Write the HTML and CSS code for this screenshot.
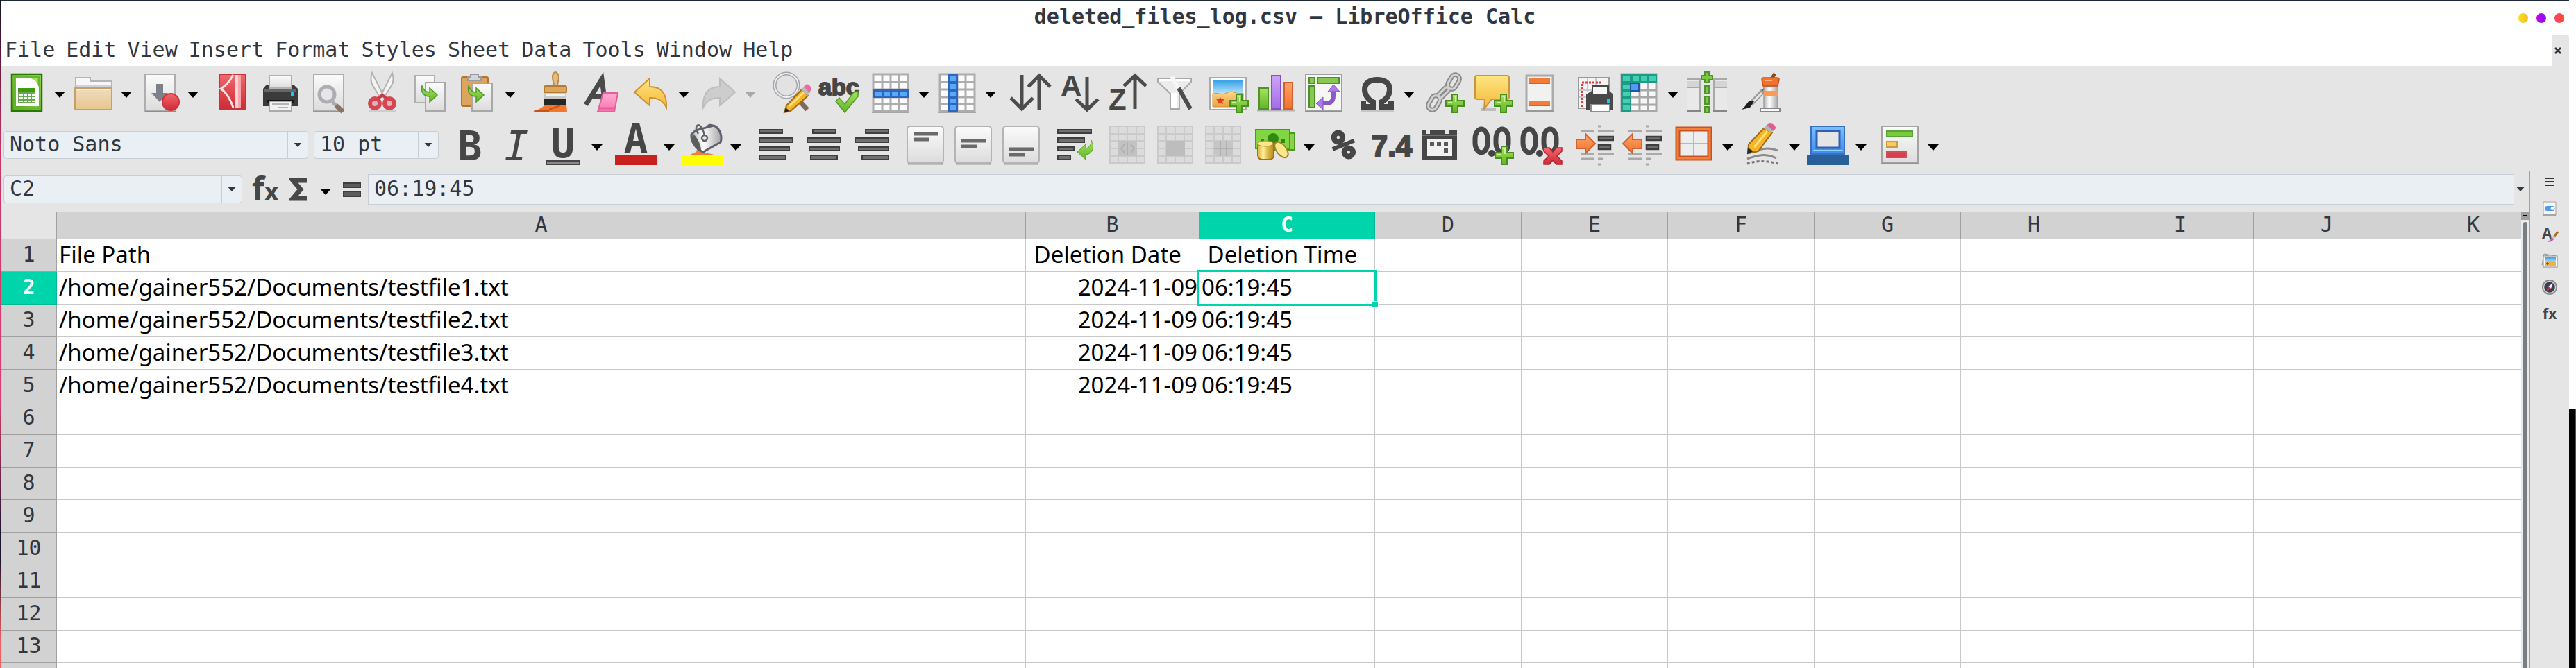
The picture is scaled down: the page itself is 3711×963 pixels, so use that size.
FILE: index.html
```html
<!DOCTYPE html>
<html lang="en">
<head>
<meta charset="utf-8">
<title>deleted_files_log.csv — LibreOffice Calc</title>
<link rel="stylesheet" href="styles.css">
</head>
<body>
<svg class="defs" width="0" height="0" aria-hidden="true">
  <defs>
    <linearGradient id="page" x1="0" y1="0" x2="0" y2="1"><stop offset="0" stop-color="#fbfbfb"/><stop offset="1" stop-color="#dcdcdc"/></linearGradient>
    <linearGradient id="green" x1="0" y1="0" x2="0" y2="1"><stop offset="0" stop-color="#a6e35e"/><stop offset="1" stop-color="#62b426"/></linearGradient>
    <linearGradient id="calc" x1="0" y1="1" x2="1" y2="0"><stop offset="0" stop-color="#4f9a12"/><stop offset="1" stop-color="#b8f078"/></linearGradient>
    <linearGradient id="tan" x1="0" y1="0" x2="0" y2="1"><stop offset="0" stop-color="#efdcc0"/><stop offset="1" stop-color="#e8c68d"/></linearGradient>
    <linearGradient id="gold" x1="0" y1="0" x2="0" y2="1"><stop offset="0" stop-color="#ffe680"/><stop offset="1" stop-color="#f3b73a"/></linearGradient>
    <linearGradient id="coin" x1="0" y1="0" x2="1" y2="0"><stop offset="0" stop-color="#d8b440"/><stop offset=".35" stop-color="#fff0a0"/><stop offset=".6" stop-color="#e0bd4a"/><stop offset="1" stop-color="#b88a20"/></linearGradient>
    <linearGradient id="orange" x1="0" y1="0" x2="0" y2="1"><stop offset="0" stop-color="#ffa468"/><stop offset="1" stop-color="#f1702c"/></linearGradient>
    <linearGradient id="purple" x1="0" y1="0" x2="0" y2="1"><stop offset="0" stop-color="#cfa2f7"/><stop offset="1" stop-color="#a36ce6"/></linearGradient>
    <linearGradient id="red" x1="0" y1="0" x2="0" y2="1"><stop offset="0" stop-color="#f0686c"/><stop offset="1" stop-color="#cf2a35"/></linearGradient>
    <linearGradient id="blue" x1="0" y1="0" x2="0" y2="1"><stop offset="0" stop-color="#7cc0ff"/><stop offset="1" stop-color="#3f8cea"/></linearGradient>
    <linearGradient id="sky" x1="0" y1="0" x2="0" y2="1"><stop offset="0" stop-color="#35a2e8"/><stop offset="1" stop-color="#bfe6fb"/></linearGradient>
    <linearGradient id="sand" x1="0" y1="0" x2="0" y2="1"><stop offset="0" stop-color="#fbd58a"/><stop offset="1" stop-color="#eba23c"/></linearGradient>
    <linearGradient id="pink" x1="0" y1="0" x2="0" y2="1"><stop offset="0" stop-color="#ffaed2"/><stop offset="1" stop-color="#f574ae"/></linearGradient>
    <linearGradient id="silver" x1="0" y1="0" x2="1" y2="0"><stop offset="0" stop-color="#b4b4b4"/><stop offset=".4" stop-color="#ffffff"/><stop offset="1" stop-color="#a6a6a6"/></linearGradient>
    <symbol id="plus" viewBox="0 0 28 28"><path d="M10 1h8v9h9v8h-9v9h-8v-9H1v-8h9z" fill="url(#green)" stroke="#4a8f22" stroke-width="2"/><path d="M12 4h3v8M4 13h6" fill="none" stroke="#c9f29a" stroke-width="2"/></symbol>
    <symbol id="caret" viewBox="0 0 16 9"><path d="M0 0h16L8 9z" fill="currentColor"/></symbol>
    <symbol id="goarrow" viewBox="0 0 26 26"><path d="M2 1c-2 9 2 15 11 15v8l11-10L13 4v6C8 10 4 7 2 1z" fill="url(#green)" stroke="#4b9a2a" stroke-width="1.500"/></symbol>
    <symbol id="grid" viewBox="0 0 60 60"><path d="M3 57h54v2H3z" fill="#a6a6a6"/><rect x="5" y="3" width="50" height="53" fill="#fbfbfb"/><path d="M5 3h50v53H5zM5 14.500h50M5 25h50M5 36h50M5 46h50M18 3v53M30 3v53M42 3v53" fill="none" stroke="#adadad" stroke-width="3"/></symbol>
    <symbol id="palegrid" viewBox="0 0 60 60"><rect x="6" y="3" width="50" height="53" fill="#dcdcdc"/><path d="M6 3h50v53H6zM6 14h50M6 24h50M6 35h50M6 46h50M18 3v53M31 3v53M44 3v53" fill="none" stroke="#cacaca" stroke-width="2"/></symbol>
    <symbol id="button" viewBox="0 0 60 60"><path d="M7 57h50" stroke="#999" stroke-width="3"/><rect x="6" y="3" width="52" height="53" rx="4" fill="url(#page)" stroke="#b4b4b4" stroke-width="2"/></symbol>
    <symbol id="zeros" viewBox="0 0 60 60"><g fill="none" stroke="#464646" stroke-width="7"><rect x="6" y="7" width="18" height="34" rx="9" ry="14"/><rect x="36" y="7" width="18" height="34" rx="9" ry="14"/></g><circle cx="30" cy="42" r="5" fill="#444"/></symbol>
    <symbol id="indentlines" viewBox="0 0 60 60"><path d="M12 10h20M37 10h23M37 3h5M12 43h20M37 43h23M12 50h20M37 50h8M37 58h5" stroke="#a9a9a9" stroke-width="3"/><path d="M38 18h21v5H38zM38 30h17v6H38z" fill="#707070" stroke="#3e3e3e" stroke-width="2.500"/></symbol>
  </defs>
</svg>

<div class="edge-left"></div>
<div class="window">
  <header class="titlebar">
    <h1 class="title">deleted_files_log.csv — LibreOffice Calc</h1>
    <div class="window-buttons">
      <button class="dot dot-min" aria-label="Minimize"></button>
      <button class="dot dot-max" aria-label="Maximize"></button>
      <button class="dot dot-close" aria-label="Close"></button>
    </div>
  </header>

  <div class="menurow">
    <nav class="menubar" aria-label="Menu">
      <button>File</button><button>Edit</button><button>View</button><button>Insert</button><button>Format</button><button>Styles</button><button>Sheet</button><button>Data</button><button>Tools</button><button>Window</button><button>Help</button>
    </nav>
    <button class="close-doc" aria-label="Close document"><svg width="10" height="10" viewBox="0 0 10 10"><path d="M1 1l8 8M9 1L1 9" stroke="#2f343f" stroke-width="2.500"/></svg></button>
  </div>

  <div class="toolbar toolbar-standard">
    <button class="tool" aria-label="New"><svg viewBox="0 0 60 60"><rect x="9" y="3" width="43" height="53" fill="url(#calc)" stroke="#257a00" stroke-width="2.500"/><rect x="13" y="7" width="35" height="45" fill="none" stroke="#69b52c" stroke-width="3"/><path d="M15 9h21c7 2 11 7 12 14v26H15z" fill="#fff"/><path d="M18 23h25v21H18z" fill="#6aa84f"/><path d="M18 23h25v6H18z" fill="#3f9a10"/><g fill="#fff"><path d="M20 31h5v3h-5zM27 31h4v3h-4zM33 31h3v3h-3zM38 31h4v3h-4zM20 36h5v3h-5zM27 36h4v3h-4zM33 36h3v3h-3zM38 36h4v3h-4zM20 41h5v2h-5zM27 41h4v2h-4zM33 41h3v2h-3zM38 41h4v2h-4z"/></g></svg></button>
    <button class="drop" aria-label="New options"><svg><use href="#caret"/></svg></button>
    <button class="tool" aria-label="Open"><svg viewBox="0 0 60 60"><path d="M5 22V8h21v5h31v10z" fill="#f7f7fa" stroke="#b4b4b8" stroke-width="2"/><path d="M6 18h50v4H6z" fill="#d2d2d6"/><rect x="4" y="23" width="53" height="31" fill="url(#tan)" stroke="#c7a068" stroke-width="2"/><path d="M6 25h49" stroke="#fbeeda" stroke-width="2"/></svg></button>
    <button class="drop" aria-label="Open options"><svg><use href="#caret"/></svg></button>
    <button class="tool" aria-label="Save"><svg viewBox="0 0 60 60"><rect x="9" y="3" width="43" height="53" fill="url(#page)" stroke="#aeaeae" stroke-width="2"/><path d="M9 57h44" stroke="#8d8d8d" stroke-width="2"/><path d="M25 17h10v13h7L30 43 18 30h7z" fill="#7d828a"/><circle cx="46" cy="43" r="12" fill="url(#red)" stroke="#d42f3c" stroke-width="2"/></svg></button>
    <button class="drop" aria-label="Save options"><svg><use href="#caret"/></svg></button>
    <span class="sep"></span>
    <button class="tool" aria-label="Export as PDF"><svg viewBox="0 0 60 60"><rect x="12" y="3" width="38" height="50" fill="url(#red)" stroke="#c8323c" stroke-width="2"/><path d="M34 4h9v48h-9z" fill="#f4a6aa"/><path d="M35 4h4v48h-4z" fill="#fbd4d6"/><path d="M32 4C27 13 21 20 14 24c7 4 14 15 18 27" fill="none" stroke="#fbe6e6" stroke-width="3"/></svg></button>
    <button class="tool" aria-label="Print"><svg viewBox="0 0 60 60"><path d="M6 24l5-6h39l6 6v25H6z" fill="#3b3b3b"/><path d="M8 24h46v4H8z" fill="#666"/><path d="M15 5h32v18H15z" fill="url(#page)" stroke="#b2b2b2" stroke-width="2"/><path d="M12 40h38v4H12z" fill="#161616"/><path d="M15 42h32v14H15z" fill="#f2f2f2" stroke="#aaa" stroke-width="2"/><path d="M19 46h24M27 51h15" stroke="#b5b5b5" stroke-width="2"/><path d="M46 29h5v5h-5z" fill="#18c4f8"/></svg></button>
    <button class="tool" aria-label="Print Preview"><svg viewBox="0 0 60 60"><rect x="10" y="3" width="43" height="53" fill="url(#page)" stroke="#aeaeae" stroke-width="2"/><path d="M9 57h44" stroke="#969696" stroke-width="2"/><path d="M37 43l6 6" stroke="#aaa" stroke-width="5"/><path d="M42 48l10 9" stroke="#8b7261" stroke-width="7"/><circle cx="29" cy="32" r="11" fill="#e6e6ea" stroke="#adadb2" stroke-width="5"/></svg></button>
    <span class="sep"></span>
    <button class="tool" aria-label="Cut"><svg viewBox="0 0 60 60"><path d="M17 1c-3 8-2 14 2 20l10 16 4-4zM46 1c3 8 2 14-2 20L34 37l-4-4z" fill="#f4f4f4" stroke="#b2b2b2" stroke-width="2"/><path d="M12 56h40" stroke="#cdcdcd" stroke-width="3"/><g fill="#dcb6b8" stroke="#d64550" stroke-width="6"><circle cx="21" cy="45" r="7"/><circle cx="42" cy="45" r="7"/></g><path d="M25 38l7-5 6 5" fill="none" stroke="#c93c46" stroke-width="4"/></svg></button>
    <button class="tool" aria-label="Copy"><svg viewBox="0 0 60 60"><rect x="10" y="5" width="28" height="39" fill="url(#page)" stroke="#b0b0b0" stroke-width="2"/><rect x="25" y="15" width="28" height="41" fill="url(#page)" stroke="#a8a8a8" stroke-width="2"/><use href="#goarrow" x="18" y="19" width="26" height="26"/></svg></button>
    <button class="tool" aria-label="Paste"><svg viewBox="0 0 60 60"><rect x="8" y="7" width="38" height="42" rx="2" fill="#dca45c" stroke="#a87838" stroke-width="2"/><path d="M17 12V7h4V3h11v4h4v5z" fill="#d6d6da" stroke="#9a9aa0" stroke-width="2"/><rect x="23" y="16" width="29" height="40" fill="url(#page)" stroke="#a8a8a8" stroke-width="2"/><use href="#goarrow" x="16" y="19" width="26" height="26"/></svg></button>
    <button class="drop" aria-label="Paste options"><svg><use href="#caret"/></svg></button>
    <span class="sep"></span>
    <button class="tool" aria-label="Clone Formatting"><svg viewBox="0 0 60 60"><path d="M24 46h31l1 12H8c-3-3 8-3 14-9z" fill="#f07828"/><path d="M10 56h20M30 54l16-6" stroke="#c9501a" stroke-width="2"/><path d="M37 20c0-5-2-8-2-13s3-7 4-7 5 2 5 7-2 8-2 13z" fill="#e6bc80" stroke="#b98a4c" stroke-width="2"/><rect x="23" y="20" width="32" height="10" rx="2" fill="#dda65c" stroke="#b27c34" stroke-width="2"/><path d="M23 30h32v9H23z" fill="#c9c9c9"/><path d="M25 32h28v3H25z" fill="#f2f2f2"/><path d="M23 39h32v8H23z" fill="#262626"/></svg></button>
    <button class="tool" aria-label="Clear Direct Formatting"><svg viewBox="0 0 60 60"><path d="M14 47L37 10l5 37M24 35h18" fill="none" stroke="#4a4a4a" stroke-width="7"/><path d="M39 30h21L55 57H31z" fill="url(#pink)" stroke="#e0609c" stroke-width="2"/><path d="M32 52h23" stroke="#ee5a9c" stroke-width="3"/></svg></button>
    <span class="sep"></span>
    <button class="tool" aria-label="Undo"><svg viewBox="0 0 60 60"><path d="M7 29L29 9v12c16 0 25 9 24 30-5-10-12-14-24-14v11z" fill="url(#gold)" stroke="#d09030" stroke-width="2"/></svg></button>
    <button class="drop" aria-label="Undo options"><svg><use href="#caret"/></svg></button>
    <button class="tool" aria-label="Redo" disabled><svg viewBox="0 0 60 60"><path d="M56 29L34 9v12C18 21 9 30 10 51c5-10 12-14 24-14v11z" fill="#cdcdcd" stroke="#bdbdbd" stroke-width="2"/></svg></button>
    <button class="drop drop-off" aria-label="Redo options" disabled><svg><use href="#caret"/></svg></button>
    <span class="sep"></span>
    <button class="tool" aria-label="Find and Replace"><svg viewBox="0 0 60 60"><path d="M38 34l18 20" stroke="#7d6a5c" stroke-width="7"/><circle cx="26" cy="19" r="17" fill="#e2e2e2" stroke="#a4a4aa" stroke-width="5"/><circle cx="26" cy="19" r="17" fill="none" stroke="#f0f0f2" stroke-width="2"/><path d="M48 25l9 9-25 22-9 2 3-10z" fill="#f6b524" stroke="#a06c14" stroke-width="2"/><path d="M30 49l21-20" stroke="#ffe07a" stroke-width="3"/><path d="M23 58l2-7 5 5z" fill="#222"/><path d="M47 25l4-4 9 9-4 4z" fill="#b9b9b9"/><path d="M51 21l3-3c4-2 9 4 7 8l-2 4z" fill="#ef6a9c"/></svg></button>
    <button class="tool" aria-label="Spelling"><svg viewBox="0 0 60 60"><text x="3" y="33" class="glyph glyph-abc">abc</text><path d="M28 42l5-5 8 9 13-17 6-1v7L41 58z" fill="url(#green)" stroke="#4f9e2a" stroke-width="1.500"/></svg></button>
    <span class="sep"></span>
    <button class="tool" aria-label="Row"><svg viewBox="0 0 60 60"><use href="#grid"/><path d="M4 24h52v13H4z" fill="#2f66bd"/><path d="M7 28h10v6H7zM20 28h9v6h-9zM32 28h9v6h-9zM44 28h10v6H44z" fill="#5aa8f8"/></svg></button>
    <button class="drop" aria-label="Row options"><svg><use href="#caret"/></svg></button>
    <button class="tool" aria-label="Column"><svg viewBox="0 0 60 60"><use href="#grid"/><path d="M16 2h15v55H16z" fill="#2f66bd"/><path d="M19 5h9v8h-9zM19 17h9v7h-9zM19 28h9v7h-9zM19 38h9v7h-9zM19 48h9v7h-9z" fill="#5aa8f8"/></svg></button>
    <button class="drop" aria-label="Column options"><svg><use href="#caret"/></svg></button>
    <span class="sep"></span>
    <button class="tool" aria-label="Sort"><svg viewBox="0 0 60 60"><path d="M19 4v50M3 37l16 16 16-16M44 55V5M28 21L44 5l16 16" fill="none" stroke="#4c4c4c" stroke-width="5"/></svg></button>
    <button class="tool" aria-label="Sort Ascending"><svg viewBox="0 0 60 60"><text x="6" y="34" class="glyph glyph-sort">A</text><path d="M44 7v48M28 39l16 15 16-15" fill="none" stroke="#4c4c4c" stroke-width="5"/></svg></button>
    <button class="tool" aria-label="Sort Descending"><svg viewBox="0 0 60 60"><text x="6" y="54" class="glyph glyph-sort">Z</text><path d="M44 53V4M28 20L44 5l16 15" fill="none" stroke="#4c4c4c" stroke-width="5"/></svg></button>
    <button class="tool" aria-label="AutoFilter"><svg viewBox="0 0 60 60"><path d="M8 9h48v5L39 31v22H26V31L8 14z" fill="#ececec" stroke="#a9a9a9" stroke-width="2"/><path d="M10 10h44v3H10z" fill="#fff"/><path d="M27 30h8v22h-8z" fill="#fff"/><path d="M28 6l10 19" stroke="#f6f6f6" stroke-width="6"/><path d="M38 23l17 30" stroke="#4a4d4a" stroke-width="6"/></svg></button>
    <span class="sep"></span>
    <button class="tool" aria-label="Insert Image"><svg viewBox="0 0 60 60"><rect x="6" y="8" width="52" height="46" fill="#fff" stroke="#a9a9a9" stroke-width="2"/><path d="M10 12h44v20H10z" fill="url(#sky)"/><path d="M10 32c6-5 12 3 20-2s15 3 24 0v20H10z" fill="url(#sand)" stroke="#d98a30" stroke-width="1"/><path d="M21 36l2 3 4 0-3 3 1 4-4-2-4 2 1-4-3-3h4z" fill="#e0401c"/><use href="#plus" x="34" y="31" width="28" height="28"/></svg></button>
    <button class="tool" aria-label="Insert Chart"><svg viewBox="0 0 60 60"><path d="M5 55h54" stroke="#b5b5b5" stroke-width="3"/><rect x="8" y="23" width="13" height="30" fill="url(#green)" stroke="#4f9428" stroke-width="2"/><rect x="26" y="5" width="13" height="48" fill="url(#purple)" stroke="#8352c4" stroke-width="2"/><rect x="44" y="15" width="12" height="38" fill="url(#orange)" stroke="#d3602a" stroke-width="2"/></svg></button>
    <button class="tool" aria-label="Insert Pivot Table"><svg viewBox="0 0 60 60"><rect x="6" y="3" width="52" height="53" fill="#f6f6f4" stroke="#a0a0a0" stroke-width="2"/><path d="M5 57h54" stroke="#909090" stroke-width="2"/><g fill="#86c850" stroke="#4a8f2c" stroke-width="2"><rect x="11" y="8" width="8" height="8"/><rect x="23" y="8" width="31" height="8"/><rect x="11" y="20" width="8" height="31"/></g><path d="M46 22v12q0 11-11 11H27" fill="none" stroke="#8a5bc8" stroke-width="6"/><path d="M38 28l8-10 9 10zM31 36v18l-10-9z" fill="#ab7ce6" stroke="#8352c4" stroke-width="1"/></svg></button>
    <span class="sep"></span>
    <button class="tool" aria-label="Special Character"><svg viewBox="0 0 60 60"><path d="M8 56h48" stroke="#c6c6c6" stroke-width="4"/><path d="M12 42v8h14v-7C18 39 14 32 14 25c0-10 8-14 18-14s18 4 18 14c0 7-4 14-12 18v7h14v-8" fill="none" stroke="#464646" stroke-width="8"/></svg></button>
    <button class="drop" aria-label="Special Character options"><svg><use href="#caret"/></svg></button>
    <button class="tool" aria-label="Insert Hyperlink"><svg viewBox="0 0 60 60"><g fill="none"><g stroke="#8c8c8c" stroke-width="7"><rect x="-6" y="-11" width="12" height="22" rx="6" transform="translate(18 44) rotate(30)"/><rect x="-3" y="-9" width="6" height="19" rx="3" transform="translate(32 29) rotate(45)"/><rect x="-6" y="-11" width="12" height="22" rx="6" transform="translate(46 14) rotate(30)"/></g><g stroke="#d2d2d2" stroke-width="3"><rect x="-6" y="-11" width="12" height="22" rx="6" transform="translate(18 44) rotate(30)"/><rect x="-3" y="-9" width="6" height="19" rx="3" transform="translate(32 29) rotate(45)"/><rect x="-6" y="-11" width="12" height="22" rx="6" transform="translate(46 14) rotate(30)"/></g></g><use href="#plus" x="34" y="31" width="28" height="28"/></svg></button>
    <button class="tool" aria-label="Insert Comment"><svg viewBox="0 0 60 60"><path d="M16 54h22" stroke="#bdbdbd" stroke-width="4"/><path d="M10 5h44q3 0 3 3v28q0 3-3 3H32L21 53l1-14H11q-3 0-3-3V8q0-3 2-3z" fill="url(#gold)" stroke="#c8963c" stroke-width="2"/><use href="#plus" x="35" y="31" width="28" height="28"/></svg></button>
    <button class="tool" aria-label="Headers and Footers"><svg viewBox="0 0 60 60"><rect x="13" y="5" width="38" height="51" fill="#f1f1f1" stroke="#aaa" stroke-width="3"/><path d="M12 56h40" stroke="#999" stroke-width="3"/><path d="M17 9h30v8H17zM17 42h30v7H17z" fill="#f27c38"/><path d="M17 16h30M17 48h30" stroke="#d96020" stroke-width="2"/></svg></button>
    <span class="sep"></span>
    <button class="tool" aria-label="Define Print Area"><svg viewBox="0 0 60 60"><rect x="11" y="8" width="44" height="44" fill="#f4f4f4" stroke="#9a9a9a" stroke-width="2"/><path d="M12 26h20M12 36h10M24 9v20M36 9v10" stroke="#c5c9d2" stroke-width="2"/><path d="M16 15h28M16 17v34" stroke="#e23c3c" stroke-width="3" stroke-dasharray="3 2" fill="none"/><path d="M30 19h25v8l6 5v22H22V32l8-5z" fill="#484848"/><path d="M32 22h20v9H32z" fill="#f6f6f6"/><path d="M29 47h27v10H29z" fill="#fff" stroke="#8e8e8e" stroke-width="2"/><path d="M52 39h5v5h-5z" fill="#18c4f8"/></svg></button>
    <button class="tool" aria-label="Freeze Rows and Columns"><svg viewBox="0 0 60 60"><rect x="4" y="3" width="50" height="53" fill="#f7f7f7"/><path d="M4 3h50v53H4zM4 26h50M4 36h50M4 47h50M30 3v53M42 3v53" fill="none" stroke="#a8a8a8" stroke-width="3"/><path d="M3 2h52v14H18v41H3z" fill="#1f9a84"/><path d="M6 5h10v8H6zM20 5h9v8h-9zM32 5h9v8h-9zM44 5h9v8h-9zM6 18h10v7H6zM6 28h10v7H6zM6 38h10v7H6zM6 48h10v6H6z" fill="#45cfb2"/><path d="M17 16h12v11H17z" fill="#4f9cf4" stroke="#1f56a8" stroke-width="2"/></svg></button>
    <button class="drop" aria-label="Freeze options"><svg><use href="#caret"/></svg></button>
    <button class="tool" aria-label="Split Window"><svg viewBox="0 0 60 60"><path d="M2 10h19v47H2zM41 10h19v47H41z" fill="#e9e9e9"/><path d="M2 13h19v8H2zM41 13h19v8H41z" fill="#d4d4d4"/><path d="M2 10h19v46M2 22h19M60 10H41v46M41 22h19" fill="none" stroke="#a9a9a9" stroke-width="2"/><path d="M2 56h20M40 56h20" stroke="#86868a" stroke-width="3"/><path d="M28 0h6v5h5v6h-5v4h-6v-4h-5V5h5z" fill="#7bc846" stroke="#4f9428" stroke-width="2"/><path d="M28 20h6v11h-6zM28 35h6v11h-6zM28 50h6v8h-6z" fill="#7bc846" stroke="#4f9428" stroke-width="2"/></svg></button>
    <span class="sep"></span>
    <button class="tool" aria-label="Show Draw Functions"><svg viewBox="0 0 60 60"><path d="M52 2L34 30" stroke="#8a4c1a" stroke-width="5"/><path d="M35 27L17 46" stroke="#9a9a9a" stroke-width="7"/><path d="M33 30L19 44" stroke="#e6e6e6" stroke-width="3"/><path d="M22 42l-6 9-12 3c4-3 6-7 11-13z" fill="#1f1f1f"/><path d="M36 20h20v32H36z" fill="url(#silver)" stroke="#a0a0a0" stroke-width="1.500"/><path d="M36 27h20v7H36z" fill="#ff9a54"/><path d="M35 8h20q3 0 3 3l-2 9H35l-2-9q0-3 2-3z" fill="#f07232" stroke="#c9501a" stroke-width="1.500"/><path d="M38 12h10" stroke="#ffb080" stroke-width="2"/><path d="M31 52h28v5H31z" fill="#fafafa" stroke="#85858b" stroke-width="2"/></svg></button>
  </div>

  <div class="toolbar toolbar-format">
    <label class="combo combo-font"><select aria-label="Font Name"><option>Noto Sans</option></select><span class="combo-arrow"><svg><use href="#caret"/></svg></span></label>
    <label class="combo combo-size"><select aria-label="Font Size"><option>10 pt</option></select><span class="combo-arrow"><svg><use href="#caret"/></svg></span></label>
    <span class="sep"></span>
    <button class="tool" aria-label="Bold"><svg viewBox="0 0 60 60"><text x="33" y="52" class="glyph glyph-mid">B</text></svg></button>
    <button class="tool" aria-label="Italic"><svg viewBox="0 0 60 60"><text x="31" y="52" class="glyph glyph-mid glyph-italic">I</text></svg></button>
    <button class="tool" aria-label="Underline"><svg viewBox="0 0 60 60"><text x="29" y="48" class="glyph glyph-mid">U</text><rect x="5" y="53" width="48" height="5" fill="#8a8a8a" stroke="#454545" stroke-width="2"/></svg></button>
    <button class="drop" aria-label="Underline options"><svg><use href="#caret"/></svg></button>
    <span class="sep"></span>
    <button class="tool" aria-label="Font Color"><svg viewBox="0 0 60 60"><text x="30" y="42" class="glyph glyph-mid">A</text><path d="M0 44h60v15H0z" fill="#c9211e"/></svg></button>
    <button class="drop" aria-label="Font Color options"><svg><use href="#caret"/></svg></button>
    <button class="tool" aria-label="Background Color"><svg viewBox="0 0 60 60"><path d="M12 44l9-4 3-12 5 12 18 4z" fill="#f08038"/><path d="M20 9L46 2c9 3 13 16 10 24L31 40C20 36 13 24 14 15z" fill="url(#silver)" stroke="#5f626c" stroke-width="3"/><path d="M17 14c-4 6-2 14 6 22l5 3c0-8-3-16-11-25z" fill="#5b5f5c"/><path d="M24 14C18 6 22-1 26 2s6 8 7 16M36 5c2-5 7-5 10-2" fill="none" stroke="#5f626c" stroke-width="2.500"/><circle cx="33" cy="20" r="4" fill="#e8e8e8" stroke="#5f626c" stroke-width="2.500"/><path d="M0 44h60v15H0z" fill="#ff0"/></svg></button>
    <button class="drop" aria-label="Background Color options"><svg><use href="#caret"/></svg></button>
    <span class="sep"></span>
    <button class="tool" aria-label="Align Left"><svg viewBox="0 0 60 60" class="bars"><path d="M8 8h33v5H8zM8 20h48v6H8zM8 33h43v5H8zM8 45h38v6H8z"/></svg></button>
    <button class="tool" aria-label="Center Horizontally"><svg viewBox="0 0 60 60" class="bars"><path d="M16 8h33v5H16zM8 20h48v6H8zM11 33h43v5H11zM13 45h38v6H13z"/></svg></button>
    <button class="tool" aria-label="Align Right"><svg viewBox="0 0 60 60" class="bars"><path d="M23 8h33v5H23zM8 20h48v6H8zM13 33h43v5H13zM18 45h38v6H18z"/></svg></button>
    <span class="sep"></span>
    <button class="tool" aria-label="Align Top"><svg viewBox="0 0 60 60"><use href="#button"/><path d="M15 14h35M15 22h22" stroke="#6a6a6a" stroke-width="5"/></svg></button>
    <button class="tool" aria-label="Center Vertically"><svg viewBox="0 0 60 60"><use href="#button"/><path d="M15 24h35M15 32h22" stroke="#6a6a6a" stroke-width="5"/></svg></button>
    <button class="tool" aria-label="Align Bottom"><svg viewBox="0 0 60 60"><use href="#button"/><path d="M15 36h35M15 44h22" stroke="#6a6a6a" stroke-width="5"/></svg></button>
    <span class="sep"></span>
    <button class="tool" aria-label="Wrap Text"><svg viewBox="0 0 60 60"><g class="bars"><path d="M8 8h48v5H8zM8 20h38v6H8zM8 33h23v5H8zM8 45h18v6H8z"/></g><path d="M36 40l12-11v6c5-1 8-5 8-12 5 9 3 20-8 21v7z" fill="url(#green)" stroke="#5aa030" stroke-width="1"/></svg></button>
    <span class="sep"></span>
    <button class="tool" aria-label="Merge and Center Cells" disabled><svg viewBox="0 0 60 60"><use href="#palegrid"/><path d="M18 24h27v22H18z" fill="#c2c2c2"/><path d="M27 29l-5 6 5 6M36 29l5 6-5 6M31 26v18" stroke="#b0b0b0" stroke-width="2" fill="none"/></svg></button>
    <button class="tool" aria-label="Merge Cells" disabled><svg viewBox="0 0 60 60"><use href="#palegrid"/><path d="M18 24h27v22H18z" fill="#bdbdbd"/></svg></button>
    <button class="tool" aria-label="Unmerge Cells" disabled><svg viewBox="0 0 60 60"><use href="#palegrid"/><path d="M18 24h27v22H18z" fill="#c6c6c6"/><path d="M18 35h27M27 24v22M36 24v22" stroke="#b0b0b0" stroke-width="2"/></svg></button>
    <span class="sep"></span>
    <button class="tool" aria-label="Format as Currency"><svg viewBox="0 0 60 60"><path d="M8 13h49v24H8z" fill="#8cd14c" stroke="#4a9a22" stroke-width="2"/><rect x="1" y="8" width="49" height="27" fill="#82d644" stroke="#4a9a22" stroke-width="2"/><circle cx="26" cy="21" r="8" fill="#2f8a10"/><path d="M8 21h5v6H8zM38 21h5v6h-5z" fill="#2f8a10"/><rect x="4" y="25" width="23" height="26" rx="6" fill="url(#coin)" stroke="#9c7420" stroke-width="2"/><ellipse cx="15" cy="28" rx="11" ry="4" fill="#fbe78a" stroke="#b08c30"/><ellipse cx="38" cy="37" rx="7" ry="13" transform="rotate(-38 38 37)" fill="#fbe88c" stroke="#a8802a" stroke-width="2"/></svg></button>
    <button class="drop" aria-label="Currency options"><svg><use href="#caret"/></svg></button>
    <button class="tool" aria-label="Format as Percent"><svg viewBox="0 0 60 60"><text x="31" y="49" class="glyph glyph-percent">%</text></svg></button>
    <button class="tool" aria-label="Format as Number"><svg viewBox="0 0 60 60"><text x="32" y="46" class="glyph glyph-num">7.4</text></svg></button>
    <button class="tool" aria-label="Format as Date"><svg viewBox="0 0 60 60"><path d="M7 9h5v5h6V9h22v5h6V9h11v43H7z" fill="#464646"/><path d="M7 16h50" stroke="#707070" stroke-width="2"/><path d="M14 22h36v24H14z" fill="#f1f1f1"/><path d="M18 25h6v6h-6zM28 25h6v6h-6zM38 25h6v6h-6zM38 35h6v6h-6z" fill="#5a5a5a"/></svg></button>
    <span class="sep"></span>
    <button class="tool" aria-label="Add Decimal Place"><svg viewBox="0 0 60 60"><use href="#zeros"/><use href="#plus" x="34" y="31" width="28" height="28"/></svg></button>
    <button class="tool" aria-label="Delete Decimal Place"><svg viewBox="0 0 60 60"><use href="#zeros"/><path d="M36 34h8l5 6 5-6h8v5l-7 7 7 7v5h-8l-5-6-5 6h-8v-5l7-7-7-7z" fill="url(#red)" stroke="#b52030" stroke-width="1.500"/></svg></button>
    <span class="sep"></span>
    <button class="tool" aria-label="Increase Indent"><svg viewBox="0 0 60 60"><use href="#indentlines"/><path d="M6 22h13v-8l14 14-14 14v-7H6z" fill="url(#orange)" stroke="#d06430" stroke-width="2"/></svg></button>
    <button class="tool" aria-label="Decrease Indent"><svg viewBox="0 0 60 60"><use href="#indentlines"/><path d="M31 22H18v-8L4 28l14 14v-7h13z" fill="url(#orange)" stroke="#d06430" stroke-width="2"/></svg></button>
    <span class="sep"></span>
    <button class="tool" aria-label="Borders"><svg viewBox="0 0 60 60"><rect x="7" y="8" width="45" height="40" fill="#ededed"/><path d="M29 10v36M9 28h40" stroke="#b9b9b9" stroke-width="2"/><rect x="6" y="7" width="46" height="42" fill="none" stroke="#c65224" stroke-width="7"/><rect x="6" y="7" width="46" height="42" fill="none" stroke="#f58038" stroke-width="3"/></svg></button>
    <button class="drop" aria-label="Borders options"><svg><use href="#caret"/></svg></button>
    <button class="tool" aria-label="Border Style"><svg viewBox="0 0 60 60"><path d="M10 42c12-2 26-12 44-4M10 50c10-3 22-10 42-1" fill="none" stroke="#8b8b8b" stroke-width="3"/><path d="M10 57c10-3 22-6 44 0" fill="none" stroke="#777" stroke-width="3" stroke-dasharray="4 3"/><path d="M34 6l12 6-20 27-15 3 1-13z" fill="#f6b524" stroke="#a06c14" stroke-width="2"/><path d="M20 33L39 10" stroke="#ffe07a" stroke-width="3"/><path d="M10 43l1-9 8 5z" fill="#2a2a2a"/><path d="M34 6l4-5 10 7-3 5z" fill="#b5b5b5"/><path d="M38 1l4-2c6 0 9 3 9 7l-3 4z" fill="#e65a92"/></svg></button>
    <button class="drop" aria-label="Border Style options"><svg><use href="#caret"/></svg></button>
    <button class="tool" aria-label="Border Color"><svg viewBox="0 0 60 60"><rect x="6" y="3" width="48" height="40" fill="url(#blue)" stroke="#3a70c0" stroke-width="2"/><rect x="14" y="10" width="33" height="24" fill="#e5e5e5" stroke="#3060b4" stroke-width="3"/><path d="M9 38h43" stroke="#90d0ff" stroke-width="2"/><path d="M0 44h60v15H0z" fill="#2a6099"/></svg></button>
    <button class="drop" aria-label="Border Color options"><svg><use href="#caret"/></svg></button>
    <span class="sep"></span>
    <button class="tool" aria-label="Conditional Formatting"><svg viewBox="0 0 60 60"><rect x="4" y="3" width="52" height="53" fill="url(#page)" stroke="#a4a4a4" stroke-width="2"/><path d="M3 57h54" stroke="#929292" stroke-width="2"/><rect x="11" y="10" width="37" height="8" fill="#7cc93e" stroke="#5aa238" stroke-width="2"/><rect x="11" y="25" width="15" height="8" fill="#f7cb5c" stroke="#cf9c3c" stroke-width="2"/><rect x="11" y="40" width="28" height="8" fill="#de3c4c" stroke="#cc5058" stroke-width="2"/></svg></button>
    <button class="drop" aria-label="Conditional options"><svg><use href="#caret"/></svg></button>
  </div>

  <div class="workspace">
    <main class="document">
      <div class="formulabar">
        <div class="combo combo-name"><input type="text" value="C2" aria-label="Name Box"><button class="combo-arrow" aria-label="Name Box list"><svg><use href="#caret"/></svg></button></div>
        <button class="fx" aria-label="Function Wizard"><span class="fx-f">f</span><span class="fx-x">x</span></button>
        <button class="sigma" aria-label="Select Function"><svg viewBox="0 0 28 44" width="28" height="44"><path d="M26 9H6l11 13L6 35h20" fill="none" stroke="#484848" stroke-width="7"/></svg></button>
        <button class="drop" aria-label="Function options"><svg><use href="#caret"/></svg></button>
        <button class="equals" aria-label="Formula"><svg viewBox="0 0 26 44" width="26" height="44"><path d="M1 13h24v6H1zM1 25h24v7H1z" fill="#5c5c5c" stroke="#3e3e3e" stroke-width="2"/></svg></button>
        <input class="formula" type="text" value="06:19:45" aria-label="Formula">
        <button class="expand" aria-label="Expand Formula Bar"><svg width="12" height="6"><use href="#caret"/></svg></button>
      </div>
      <div class="sheetarea">
        <div class="sheet">
          <table>
            <colgroup><col class="c-num"><col class="c-a"><col class="c-b"><col class="c-c"><col class="c-std" span="8"></colgroup>
            <thead><tr><td class="corner"></td><th>A</th><th>B</th><th class="on">C</th><th>D</th><th>E</th><th>F</th><th>G</th><th>H</th><th>I</th><th>J</th><th>K</th></tr></thead>
            <tbody>
              <tr><th>1</th><td>File Path</td><td> Deletion Date</td><td> Deletion Time</td><td></td><td></td><td></td><td></td><td></td><td></td><td></td><td></td></tr>
              <tr><th class="on">2</th><td>/home/gainer552/Documents/testfile1.txt</td><td class="right">2024-11-09</td><td class="active">06:19:45<span class="cursor"></span><span class="handle"></span></td><td></td><td></td><td></td><td></td><td></td><td></td><td></td><td></td></tr>
              <tr><th>3</th><td>/home/gainer552/Documents/testfile2.txt</td><td class="right">2024-11-09</td><td>06:19:45</td><td></td><td></td><td></td><td></td><td></td><td></td><td></td><td></td></tr>
              <tr><th>4</th><td>/home/gainer552/Documents/testfile3.txt</td><td class="right">2024-11-09</td><td>06:19:45</td><td></td><td></td><td></td><td></td><td></td><td></td><td></td><td></td></tr>
              <tr><th>5</th><td>/home/gainer552/Documents/testfile4.txt</td><td class="right">2024-11-09</td><td>06:19:45</td><td></td><td></td><td></td><td></td><td></td><td></td><td></td><td></td></tr>
              <tr><th>6</th><td></td><td></td><td></td><td></td><td></td><td></td><td></td><td></td><td></td><td></td><td></td></tr>
              <tr><th>7</th><td></td><td></td><td></td><td></td><td></td><td></td><td></td><td></td><td></td><td></td><td></td></tr>
              <tr><th>8</th><td></td><td></td><td></td><td></td><td></td><td></td><td></td><td></td><td></td><td></td><td></td></tr>
              <tr><th>9</th><td></td><td></td><td></td><td></td><td></td><td></td><td></td><td></td><td></td><td></td><td></td></tr>
              <tr><th>10</th><td></td><td></td><td></td><td></td><td></td><td></td><td></td><td></td><td></td><td></td><td></td></tr>
              <tr><th>11</th><td></td><td></td><td></td><td></td><td></td><td></td><td></td><td></td><td></td><td></td><td></td></tr>
              <tr><th>12</th><td></td><td></td><td></td><td></td><td></td><td></td><td></td><td></td><td></td><td></td><td></td></tr>
              <tr><th>13</th><td></td><td></td><td></td><td></td><td></td><td></td><td></td><td></td><td></td><td></td><td></td></tr>
              <tr><th></th><td></td><td></td><td></td><td></td><td></td><td></td><td></td><td></td><td></td><td></td><td></td></tr>
            </tbody>
          </table>
        </div>
        <div class="scrollbar"><div class="splitter"></div><div class="thumb"></div></div>
      </div>
    </main>
    <aside class="sidebar">
      <button aria-label="Sidebar Settings"><svg viewBox="0 0 24 24"><path d="M5 7h14M5 12h14M5 17h14" stroke="#2f343f" stroke-width="2"/></svg></button>
      <button aria-label="Properties"><svg viewBox="0 0 24 24"><rect x="3" y="3" width="18" height="19" fill="#f4f4f4" stroke="#a3a3a3"/><path d="M3 22h18" stroke="#999" stroke-width="1.500"/><rect x="5" y="9" width="14" height="7" rx="3.500" fill="#4a9cf0"/><circle cx="16" cy="12.500" r="3" fill="#fff" stroke="#4a8ed0"/></svg></button>
      <button aria-label="Styles"><svg viewBox="0 0 24 24"><text x="1" y="18" class="glyph glyph-side">A</text><path d="M24 8l-7 9" stroke="#b06a24" stroke-width="3"/><path d="M19 14l-4 4" stroke="#c9c9c9" stroke-width="3"/><path d="M16 17l-7 6 6-1 3-3z" fill="#c050b8"/></svg></button>
      <button aria-label="Gallery"><svg viewBox="0 0 24 24"><path d="M1 18L4 2l17 3v4z" fill="#fafafa" stroke="#9a9a9a"/><path d="M5 5l8 1" stroke="#38a8e0" stroke-width="2"/><rect x="3" y="5" width="20" height="16" fill="#fff" stroke="#8c8c8c"/><path d="M5 7h16v7H5z" fill="url(#sky)"/><path d="M5 13q8-2 16 0v6H5z" fill="#f0b04c"/><path d="M9 14v4M7 16h4" stroke="#dc4020" stroke-width="2"/></svg></button>
      <button aria-label="Navigator"><svg viewBox="0 0 24 24"><circle cx="12" cy="12" r="10" fill="#36405a" stroke="#8a8a8a" stroke-width="2"/><circle cx="12" cy="12" r="8.500" fill="none" stroke="#d4d4d4" stroke-width="1.500"/><path d="M17 6l-7 5 4 3z" fill="#f0f0f0"/><path d="M7 18l3-7 4 3z" fill="#d82c2c"/></svg></button>
      <button aria-label="Functions"><svg viewBox="0 0 24 24"><text x="2" y="20" class="glyph glyph-side">fx</text></svg></button>
    </aside>
  </div>
</div>
<div class="edge-right"></div>
</body>
</html>
```
FILE: styles.css
```css
* { box-sizing: border-box; }

html, body { height: 100%; }

body {
  margin: 0;
  display: flex;
  overflow: hidden;
  background: #fff;
  color: #31363f;
  font-family: "DejaVu Sans Mono", monospace;
  font-size: 30px;
}

button, input, select {
  font: inherit;
  color: inherit;
  background: none;
  border: 0;
  padding: 0;
  margin: 0;
}

button { display: flex; align-items: center; justify-content: center; flex: none; }

svg { display: block; }
.defs { position: absolute; }

.edge-left {
  flex: none;
  width: 1px;
  background: linear-gradient(#101522 0%, #5a1838 8%, #c83468 22%, #d83c6c 60%, #1c1430 80%, #20152e 84%, #f06060 96%);
}
.edge-right {
  flex: none;
  width: 10px;
  background: linear-gradient(#fff 589px, transparent 589px), linear-gradient(90deg, #000 9px, #c01858 9px);
}

.window {
  flex: 1;
  min-width: 0;
  display: flex;
  flex-direction: column;
  background: #e5e5e5;
  border-top: 2px solid #1f2937;
}

/* title bar */
.titlebar {
  display: grid;
  grid-template-columns: 1fr auto 1fr;
  align-items: center;
  height: 48px;
  background: #fff;
}
.title {
  grid-column: 2;
  margin: 0;
  padding-bottom: 4px;
  font-size: 30px;
  line-height: 36px;
  font-weight: bold;
}
.window-buttons { justify-self: end; display: flex; gap: 12px; padding-right: 7px; }
.dot { width: 14px; height: 14px; border-radius: 50%; }
.dot-min { background: linear-gradient(90deg, #f4e414, #fdb62c); }
.dot-max { background: linear-gradient(90deg, #d000e0, #7a10ff); }
.dot-close { background: linear-gradient(90deg, #ff3f6c, #ff4d28); }

/* menu */
.menurow { display: flex; height: 45px; background: #fff; }
.menubar { flex: 1; display: flex; gap: 16px; padding: 0 0 3px 6px; }
.close-doc { width: 24px; padding-right: 8px; background: #e5e5e5; border-top-right-radius: 4px; }

/* toolbars */
.toolbar { display: flex; align-items: center; padding-left: 3px; color: #000; }
.toolbar-standard { height: 77px; }
.toolbar-format { height: 74px; padding-left: 4px; }
.tool { width: 69px; height: 60px; padding: 0 5px 0 4px; }
.tool svg { width: 60px; height: 60px; overflow: visible; }
.drop { width: 27px; height: 60px; padding: 6px 2px 0 0; color: #000; }
.drop svg { width: 16px; height: 9px; }
.drop-off { color: #a8a8a8; }
.sep { width: 8px; flex: none; }

.bars { fill: #707070; stroke: #3e3e3e; stroke-width: 2; }

.glyph { font-family: "DejaVu Sans Mono", monospace; font-weight: bold; fill: #464646; }
.glyph-abc { font-family: "Liberation Sans", sans-serif; font-size: 34px; stroke: #464646; stroke-width: 2; }
.glyph-sort { font-family: "Liberation Sans", sans-serif; font-size: 42px; }
.glyph-mid { font-size: 58px; text-anchor: middle; }
.glyph-italic { font-style: italic; font-weight: normal; }
.glyph-percent { font-size: 56px; text-anchor: middle; stroke: #464646; stroke-width: 3; }
.glyph-num { font-family: "Liberation Sans", sans-serif; font-size: 42px; text-anchor: middle; stroke: #464646; stroke-width: 2; }
.glyph-side { font-family: "Open Sans", sans-serif; font-size: 21px; }

/* boxes with a drop arrow */
.combo {
  display: flex;
  flex: none;
  height: 40px;
  border: 1px solid #c6cdd4;
  border-radius: 4px;
  background: #eaeff3;
  color: #31363f;
}
.combo select, .combo input {
  flex: 1;
  min-width: 0;
  appearance: none;
  padding: 0 0 4px 8px;
  outline: 0;
}
.combo-arrow {
  display: flex;
  align-items: center;
  justify-content: center;
  width: 29px;
  border-left: 1px solid #c6cdd4;
  pointer-events: none;
}
.combo-arrow svg { width: 12px; height: 6px; }
.combo-font { width: 439px; margin-right: 8px; }
.combo-size { width: 180px; }
.combo-name { width: 344px; }

/* lower area */
.workspace { flex: 1; min-height: 0; display: flex; }
.document { flex: 1; min-width: 0; display: flex; flex-direction: column; }

.formulabar {
  display: flex;
  align-items: center;
  height: 59px;
  padding: 5px 0 10px 4px;
}
.fx {
  margin-left: 14px;
  width: 46px;
  align-items: baseline;
  justify-content: flex-start;
  font-family: "Open Sans", sans-serif;
  font-weight: bold;
  line-height: 60px;
  color: #464646;
}
.fx-f { font-size: 46px; }
.fx-x { font-size: 36px; }
.sigma { margin-left: 7px; width: 28px; }
.formulabar .drop { width: 50px; height: 44px; padding-right: 0; }
.equals { width: 26px; margin-right: 10px; }
.formula {
  flex: 1;
  min-width: 0;
  height: 44px;
  padding: 0 0 4px 8px;
  border: 1px solid #c6cdd4;
  background: #eaeff3;
  outline: 0;
}
.expand { width: 22px; height: 44px; padding-right: 4px; }

/* sheet */
.sheetarea { flex: 1; min-height: 0; display: flex; }
.sheet { flex: 1; min-width: 0; overflow: hidden; background: #fff; }
table {
  width: 3668px;
  table-layout: fixed;
  border-collapse: separate;
  border-spacing: 0;
}
.c-num { width: 81px; }
.c-a { width: 1396px; }
.c-b { width: 250px; }
.c-c { width: 253px; }
.c-std { width: 211px; }

th {
  padding: 0 0 3px;
  font-weight: normal;
  line-height: 34px;
  background: #d2d2d2;
  border: 0 solid #a0a0a0;
  border-right-width: 1px;
  border-bottom-width: 1px;
}
thead th { height: 40px; border-top-width: 1px; }
tbody th { height: 47px; border-left-width: 1px; }
th.on { background: #00d4aa; color: #fff; font-weight: bold; border-color: #00b894; }
.corner { height: 40px; background: #e5e5e5; border-right: 1px solid #a0a0a0; border-bottom: 1px solid #a0a0a0; }

tbody td {
  height: 47px;
  padding: 0 2px 3px 3px;
  font-family: "Noto Sans", sans-serif;
  font-size: 33px;
  line-height: 40px;
  white-space: pre;
  color: #000;
  border-right: 1px solid #c8c8c8;
  border-bottom: 1px solid #c8c8c8;
}
.right { text-align: right; }
.active { position: relative; }
.cursor { position: absolute; inset: -3px; border: 3px solid #00d4aa; }
.handle {
  position: absolute;
  right: -6px;
  bottom: -6px;
  width: 10px;
  height: 10px;
  border: 1px solid #fff;
  background: #00d4aa;
}

.scrollbar { flex: none; width: 12px; display: flex; flex-direction: column; align-items: center; background: #e9e9ee; }
.splitter {
  width: 12px;
  height: 12px;
  background: linear-gradient(#000, #000) center / 6px 2px no-repeat #a0a0a0;
}
.thumb { flex: 1; width: 6px; margin-top: 3px; border-radius: 3px 3px 0 0; background: #7a7e82; }

.sidebar {
  flex: none;
  width: 57px;
  border-left: 1px solid #a0a0a0;
  display: flex;
  flex-direction: column;
  align-items: center;
  gap: 14px;
  padding-top: 4px;
}
.sidebar button { width: 24px; height: 24px; }
.sidebar svg { width: 24px; height: 24px; overflow: visible; }
```
